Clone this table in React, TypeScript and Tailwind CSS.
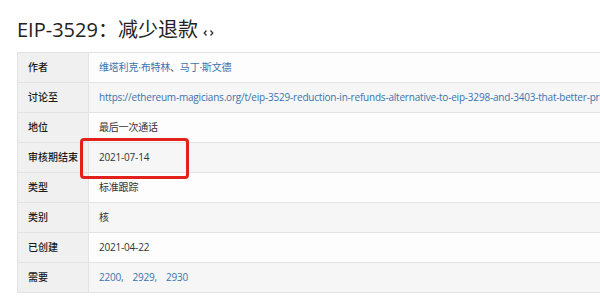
const rows: { label: string; value: React.ReactNode }[] = [
  {
    label: "作者",
    value: (
      <span>
        <a className="text-[#3b73ad]">维塔利克·布特林</a>、<a className="text-[#3b73ad]">马丁·斯文德</a>
      </span>
    ),
  },
  {
    label: "讨论至",
    value: (
      <a className="text-[#3b73ad] whitespace-nowrap">
        https://ethereum-magicians.org/t/eip-3529-reduction-in-refunds-alternative-to-eip-3298-and-3403-that-better-preserves-existing-clearing-incentives/5985
      </a>
    ),
  },
  { label: "地位", value: "最后一次通话" },
  { label: "审核期结束", value: "2021-07-14" },
  { label: "类型", value: "标准跟踪" },
  { label: "类别", value: "核" },
  { label: "已创建", value: "2021-04-22" },
  {
    label: "需要",
    value: (
      <span className="text-[#3b73ad]">
        2200<span className="mr-[9px]">,</span>2929<span className="mr-[9px]">,</span>2930
      </span>
    ),
  },
];

function CodeIcon() {
  // small "‹›" link marker after the heading
  return (
    <svg width="11" height="8" viewBox="0 0 11 8" className="ml-[5px] mt-[5px]">
      <path d="M3.5 1.5 L1.2 4 L3.5 6.5" fill="none" stroke="#333" strokeWidth="1.3" />
      <path d="M7.5 1.5 L9.8 4 L7.5 6.5" fill="none" stroke="#333" strokeWidth="1.3" />
    </svg>
  );
}

export default function App() {
  return (
    <div className="w-[600px] h-[297px] overflow-hidden bg-white font-['Open_Sans','Noto_Sans_CJK_SC',sans-serif] text-[#333]">
      <div className="relative pl-[17px] pt-[17px]">
        <h1 className="flex items-center h-[26px] text-[20px] leading-[26px] text-[#222]">
          EIP-3529：减少退款
          <CodeIcon />
        </h1>

        <div className="mt-[9px] w-[900px] border-t border-l border-[#e3e3e3] text-[10px]">
          {rows.map((r, i) => (
            <div key={r.label} className="flex h-[30px] border-b border-[#e3e3e3]">
              <div className="w-[71px] shrink-0 flex items-center pl-[10px] bg-[#f0f0f0] border-r border-[#e3e3e3] text-[#1a1a1a] text-[10px] font-medium">
                {r.label}
              </div>
              <div
                className={`flex-1 flex items-center pl-[10px] tracking-[-0.2px] ${
                  i % 2 === 1 ? "bg-[#f6f6f6]" : "bg-[#fdfdfd]"
                }`}
              >
                {r.value}
              </div>
            </div>
          ))}
        </div>

        {/* red highlight box over the review end date */}
        <div className="absolute left-[80px] top-[138px] w-[109px] h-[41px] border-[3px] border-[#e3211b] rounded-[4px]" />
      </div>
    </div>
  );
}
